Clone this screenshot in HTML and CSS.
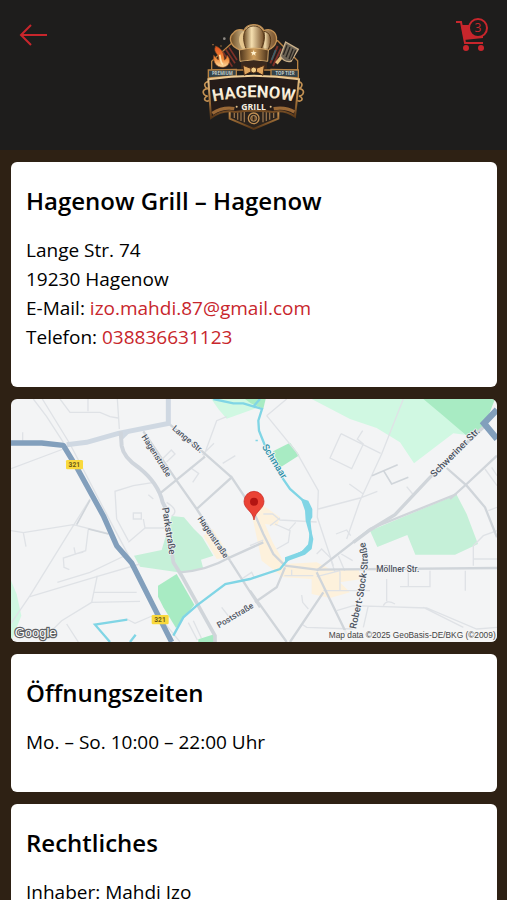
FILE: index.html
```html
<!DOCTYPE html>
<html lang="de">
<head>
    <meta charset="UTF-8">
    <meta name="viewport" content="width=device-width, initial-scale=1.0">
    <title>Hagenow Grill – Hagenow</title>
    <link rel="stylesheet" href="styles.css">
</head>
<body>

    <header class="header">
        <a class="back" href="#" aria-label="Zurück">
            <svg class="back-icon" viewBox="0 0 28 24">
                <path d="M28 12H2M12 2L2 12L12 22"/>
            </svg>
        </a>

        <!-- Logo -->
        <a class="logo" href="#" aria-label="Hagenow Grill">
            <svg class="logo-image" viewBox="-4 0 390 390">
                <defs>
                    <linearGradient id="gold" x1="0" y1="0" x2="0" y2="1">
                        <stop offset="0" stop-color="#f0d09a"/>
                        <stop offset="0.5" stop-color="#b98343"/>
                        <stop offset="1" stop-color="#553416"/>
                    </linearGradient>
                    <linearGradient id="puff" x1="0" y1="0" x2="1" y2="0">
                        <stop offset="0" stop-color="#6b4a22"/>
                        <stop offset="0.4" stop-color="#f5dfaf"/>
                        <stop offset="1" stop-color="#76502a"/>
                    </linearGradient>
                    <linearGradient id="band" x1="0" y1="0" x2="1" y2="0">
                        <stop offset="0" stop-color="#4a3119"/>
                        <stop offset="0.5" stop-color="#d2a15d"/>
                        <stop offset="1" stop-color="#4a3119"/>
                    </linearGradient>
                    <linearGradient id="fire" x1="0" y1="0" x2="0" y2="1">
                        <stop offset="0" stop-color="#e2501d"/>
                        <stop offset="0.6" stop-color="#f28b3a"/>
                        <stop offset="1" stop-color="#ffe0a4"/>
                    </linearGradient>
                    <linearGradient id="letters" x1="0" y1="0" x2="0" y2="1">
                        <stop offset="0.3" stop-color="#fffaf0"/>
                        <stop offset="1" stop-color="#e6c896"/>
                    </linearGradient>
                    <path id="nameArc" d="M50 279Q190 245 330 279"/>
                </defs>

                <!-- Schild -->
                <path d="M128 96L64 154V180H322V152L262 92Z" fill="#231f1d" stroke="#b98343" stroke-width="4"/>
                <path d="M106 118L134 160M98 126L126 170M116 112L140 150" stroke="#7d3128" stroke-width="5"/>
                <path d="M262 108L240 160M272 116L248 168" stroke="#7d3128" stroke-width="6"/>
                <path d="M256 120L244 150" stroke="#38616b" stroke-width="5"/>
                <path d="M118 276V326L190 357L264 326V276Z" fill="#2b231d" stroke="url(#gold)" stroke-width="6"/>
                <path d="M132 302V324M142 302V329M152 304V333M162 304V337M218 304V337M228 304V333M238 302V329M250 302V324" stroke="#94714a" stroke-width="4"/>
                <circle cx="190" cy="325" r="16" fill="#2b231d" stroke="#c39153" stroke-width="4"/>
                <circle cx="190" cy="325" r="9" fill="#7b562e" stroke="#d9b27a" stroke-width="2"/>
                <path d="M188 319H192V331H188Z" fill="#2b231d"/>

                <!-- Kochmütze -->
                <path d="M150 120C120 112 112 82 130 68C142 54 158 60 162 62C168 38 212 38 220 62C242 52 262 68 258 94C254 110 240 118 230 122Z" fill="url(#puff)" stroke="#c49356" stroke-width="4"/>
                <path d="M158 118C142 100 142 74 160 64C172 76 168 100 172 118Z" fill="#e4c58c"/>
                <path d="M168 118C150 76 164 48 190 48C218 48 230 76 212 118Z" fill="url(#puff)" stroke="#5b3c1c" stroke-width="3"/>
                <path d="M212 118C224 96 224 76 220 64C240 66 248 88 234 118Z" fill="url(#puff)" stroke="#5b3c1c" stroke-width="3"/>
                <path d="M147 120Q190 109 234 120L232 154Q190 145 149 154Z" fill="url(#band)" stroke="#d6aa6b" stroke-width="3"/>
                <path d="M190 120L192 126L199 127L194 131L196 137L190 133L184 137L186 131L181 127L188 126Z" fill="#fff2ce"/>
                <path d="M152 156Q190 148 230 156V176H152Z" fill="#3a281c"/>

                <!-- Flamme -->
                <path d="M76 108C66 130 90 132 84 150C78 144 74 140 70 136C68 158 78 172 98 172C118 170 124 148 110 136C110 144 106 148 102 150C102 134 96 116 76 108Z" fill="url(#fire)" stroke="#8f4a1e" stroke-width="2"/>
                <path d="M88 134C92 146 88 156 98 164" fill="none" stroke="#ffe3ad" stroke-width="5"/>
                <circle cx="102" cy="86" r="4" fill="#8f8a84"/>
                <circle cx="68" cy="104" r="2" fill="#d38d4d"/>
                <circle cx="92" cy="108" r="2" fill="#b98343"/>

                <!-- Pfannenwender -->
                <path d="M276 138L258 160" stroke="#e8c07f" stroke-width="10"/>
                <path d="M286 96L324 118L302 154Q282 158 270 138Z" fill="#6d6456" stroke="#cbb18b" stroke-width="4"/>
                <path d="M290 106L279 134M299 111L287 142M308 116L296 147M316 121L303 149" stroke="#28241f" stroke-width="4"/>

                <!-- Banner -->
                <path d="M54 180L138 178V198L54 204ZM242 178L324 180V204L242 198Z" fill="#33434a" stroke="#b98343" stroke-width="4"/>
                <text class="logo-tag" x="96" y="196">PREMIUM</text>
                <text class="logo-tag" x="284" y="196">TOP TIER</text>
                <path d="M58 214C34 216 44 236 54 236C30 236 38 258 52 258C32 266 50 280 58 270M320 214C344 216 334 236 324 236C348 236 340 258 326 258C346 266 328 280 320 270" fill="none" stroke="#c39153" stroke-width="5"/>
                <path d="M54 208Q190 186 326 208L314 320Q282 298 248 306Q190 298 134 306Q98 298 62 324Z" fill="#251b18" stroke="url(#gold)" stroke-width="6"/>
                <path d="M66 310Q98 290 132 296M312 306Q286 290 250 296" fill="none" stroke="#9a6836" stroke-width="10"/>

                <!-- Fliege -->
                <path d="M158 166L184 176V184L162 196ZM222 166L196 176V184L218 196Z" fill="#e0a65e" stroke="#4b2b15" stroke-width="3"/>
                <circle cx="190" cy="180" r="9" fill="#f0cb86" stroke="#4b2b15" stroke-width="3"/>

                <text class="logo-name"><textPath href="#nameArc" startOffset="50%">HAGENOW</textPath></text>
                <text class="logo-grill" x="190" y="299">GRILL</text>
                <circle cx="139" cy="290" r="3" fill="#e6c48d"/>
                <circle cx="241" cy="290" r="3" fill="#e6c48d"/>
            </svg>
        </a>

        <a class="cart" href="#" aria-label="Warenkorb, 3 Artikel">
            <svg class="cart-icon" viewBox="0 0 32 34">
                <path d="M0 4H5L9 25H27" fill="none" stroke="currentColor" stroke-width="2"/>
                <path d="M5 7H27V20L8 22Z" fill="currentColor"/>
                <circle cx="10" cy="30" r="3" fill="currentColor"/>
                <circle cx="25" cy="30" r="3" fill="currentColor"/>
                <circle class="cart-badge" cx="22" cy="10" r="9"/>
                <text class="cart-count" x="22" y="14">3</text>
            </svg>
        </a>
    </header>

    <main class="content">
        <section class="card">
            <h2>Hagenow Grill – Hagenow</h2>
            <p>
                Lange Str. 74<br>
                19230 Hagenow<br>
                E-Mail: <a href="mailto:izo.mahdi.87@gmail.com">izo.mahdi.87@gmail.com</a><br>
                Telefon: <a href="tel:038836631123">038836631123</a>
            </p>
        </section>

        <!-- Karte -->
        <a class="map" href="#" aria-label="Karte">
            <svg class="map-image" viewBox="33 15 1458 729">
                <rect x="33" y="15" width="1458" height="729" fill="#f3f4f5"/>

                <!-- Grünflächen -->
                <g fill="#d0f8e2">
                    <path d="M634 15H790V35L680 74L655 45Z"/>
                    <path d="M935 15H1290L1395 122L1360 118L1242 208L1200 145L1130 102L1050 75Z"/>
                    <path d="M33 560L50 600L64 665L33 744Z"/>
                    <path d="M402 485L485 468L515 366L552 370L582 405L607 430L640 485L603 497L610 525L545 536L420 518Z" fill="#c5f0d8"/>
                    <path d="M1110 410L1370 302L1400 360L1434 450L1365 482H1246L1222 423L1132 459Z" fill="#c5f0d8"/>
                </g>
                <g fill="#a8ebc3">
                    <path d="M735 15H797L790 44L752 28Z"/>
                    <path d="M1270 15H1485L1450 105L1400 125L1330 65Z"/>
                    <path d="M819 172L870 146L898 184L838 222Z"/>
                    <path d="M474 575L530 540L583 632L528 702L490 640L474 608Z"/>
                    <path d="M595 736L645 720V744H595Z"/>
                </g>

                <!-- Einkaufsstraßen -->
                <g fill="#fdf1dc">
                    <path d="M610 425L638 405L692 490L650 495Z"/>
                    <path d="M752 345L790 335L840 370L832 395L795 390L818 445L855 510L950 505L1000 530L1075 525L1085 555L1020 565L1050 595L990 612L935 600L935 555L850 550L785 500Z"/>
                </g>

                <!-- Nebenstraßen -->
                <g class="road-thin">
                    <path d="M100 15L140 68L190 145M127 15L210 150L330 380L410 530L480 670L540 744"/>
                    <path d="M33 224L190 165M180 15L210 55L300 55L330 68L354 72M264 15V52M352 15L358 105M68 140V115"/>
                    <path d="M270 315L220 395L90 605L33 688M33 410L70 416L220 392L330 420M70 416L78 458M265 405L257 470L190 492L192 520L208 527M222 460L226 480L250 474"/>
                    <path d="M172 565L270 535L385 480M90 608L300 545L420 510M292 545L275 625L420 622M275 625L185 680L120 744M280 595H410"/>
                    <path d="M350 375L345 292L400 275L462 265M350 375L385 440M430 375L435 402L385 445M400 357H424V375H400ZM435 402H500M500 325Q540 350 515 366"/>
                    <path d="M487 195L514 168L525 180L500 204M570 220L596 238L578 265M607 182L642 148M610 190L650 80L680 68M668 208L706 185"/>
                    <path d="M380 675L405 688L470 660M565 686L592 738M580 680L604 732M665 640L690 672M725 555L755 535L762 550M200 690L235 744"/>
                    <path d="M800 65L890 175L955 290L952 370L1000 515M800 65L860 15M955 345L1080 312L1132 292M1048 270L1090 300M1210 15L1145 180L1080 320L1040 435"/>
                    <path d="M1023 119L1142 178M1023 119L990 192L1055 224L1090 150L1072 135L1088 110M1220 278L1238 300"/>
                    <path d="M790 360H818L840 378L950 384M810 395L840 372M825 390L870 410L865 445L830 465M887 385L865 410M750 455L790 438M1008 420L1040 408L1052 425"/>
                    <path d="M950 480L965 465L990 490L1005 535M1015 485L1034 530M1024 480L1058 500M875 527V545M853 545H940M950 548L1020 530M970 590H1110M1020 532V590"/>
                    <path d="M1160 555V622M1150 635Q1160 615 1185 630M1225 530V578M1200 578H1290V530M1396 530V590M1105 635L1090 700M1010 650L1060 635L1280 642L1430 705L1491 700M1270 640L1390 700"/>
                    <path d="M905 603L908 625L925 645M905 690L920 700L1060 705M1420 515V455L1450 425L1491 410M1465 350L1491 340M1420 495H1491M1455 225L1491 275M1475 220L1491 245"/>
                    <path d="M445 302L460 315"/>
                </g>
                <g class="road-gray">
                    <path d="M1116 245L1193 212M1152 232L1175 270L1225 250M230 392L270 318M265 405L325 420" stroke-width="5"/>
                    <path d="M755 340L790 420L820 480L855 515M855 520L830 580L765 625M750 590L860 744"/>
                    <path d="M540 535Q620 530 690 490L790 445M690 500L780 640"/>
                    <path d="M530 260L590 345M430 112L530 260M590 345L695 250L755 340M590 345L690 500M695 250L610 175L510 92M480 298L615 188"/>
                    <path d="M498 345L520 505L545 545L645 725V744" stroke-width="11"/>
                    <path d="M870 744L970 595M950 535L1040 720M855 515L950 527L1491 522M1340 222L1400 275L1455 340L1491 430M1350 315L1400 270L1491 185"/>
                    <path d="M950 530L1110 405L1370 300"/>
                    <path d="M1060 445L1110 408L1185 362L1290 250L1450 100" stroke-width="10"/>
                </g>

                <!-- Hauptstraßen -->
                <path d="M200 152L260 145L355 118L505 88V15" fill="none" stroke="#cfd8e2" stroke-width="15"/>
                <path d="M345 118L370 135L395 110Z" fill="#cfd8e2"/>
                <path d="M362 112L365 155Q370 190 418 222Q475 268 488 325L498 345" fill="none" stroke="#cfd5dc" stroke-width="12"/>
                <path d="M33 147H125L190 154L230 220L310 365L350 455L395 507L455 626L515 744" fill="none" stroke="#829fbc" stroke-width="16" stroke-linejoin="round"/>
                <path d="M1491 47L1452 88L1491 135" fill="none" stroke="#829fbc" stroke-width="19"/>

                <!-- Schmaar -->
                <g class="water">
                    <path d="M640 15L700 28H730L786 45L775 80L777 110L793 150L846 250M762 35L780 15"/>
                    <path d="M846 250L870 285L910 320L925 350L933 430L925 465L865 495L840 525L750 555L676 570L590 635L550 670L520 725M770 137V142"/>
                    <path d="M382 677L285 692L330 744M390 744L407 722"/>
                </g>
                <path d="M902 313L925 320L937 345V370L928 385L940 435L935 465L915 482L855 504V490L905 472L925 450L928 420L917 380L915 350Z" fill="#80d5e5"/>

                <!-- Beschriftung -->
                <g class="map-label">
                    <text transform="translate(515 106) rotate(40)">Lange Str.</text>
                    <text transform="translate(424 128) rotate(58)">Hagenstraße</text>
                    <text transform="translate(592 374) rotate(56)">Hagenstraße</text>
                    <text transform="translate(657 703) rotate(-31)">Poststraße</text>
                    <text x="1129" y="534">Möllner Str.</text>
                </g>
                <g class="map-label map-label-big">
                    <text transform="translate(486 342) rotate(81)">Parkstraße</text>
                    <text transform="translate(1303 251) rotate(-45)">Schweriner Str.</text>
                    <text class="label-water" transform="translate(785 158) rotate(58)">Schmaar</text>
                    <path id="stockStreet" d="M1068 706C1078 650 1093 610 1098 550Q1112 490 1090 430" fill="none"/>
                    <text><textPath href="#stockStreet">Robert-Stock-Straße</textPath></text>
                </g>

                <!-- Bundesstraße 321 -->
                <rect x="198" y="198" width="51" height="28" rx="4" fill="#f9d93d"/>
                <text class="shield" x="223" y="220">321</text>
                <rect x="455" y="663" width="51" height="28" rx="4" fill="#f9d93d"/>
                <text class="shield" x="480" y="685">321</text>

                <!-- Markierung -->
                <path d="M762 378C758 350 732 346 732 322A30 30 0 0 1 792 322C792 346 766 350 762 378Z" fill="#ea4335" stroke="#c5221f" stroke-width="2"/>
                <circle cx="762" cy="323" r="12" fill="#b31412"/>

                <text class="google" x="44" y="728">Google</text>
                <rect x="985" y="708" width="506" height="36" fill="#f5f5f5" opacity="0.7"/>
                <text class="map-data" x="1487" y="733">Map data ©2025 GeoBasis-DE/BKG (©2009)</text>
            </svg>
        </a>

        <section class="card">
            <h2>Öffnungszeiten</h2>
            <p>Mo. – So. 10:00 – 22:00 Uhr</p>
        </section>

        <section class="card">
            <h2>Rechtliches</h2>
            <p>Inhaber: Mahdi Izo</p>
        </section>
    </main>

</body>
</html>
```

FILE: styles.css
```css
* {
    box-sizing: border-box;
}

body {
    margin: 0;
    font-family: "Open Sans", sans-serif;
    font-size: 19px;
    line-height: 29px;
    color: #000;
    background-color: #2e2114;
}

a {
    color: #c8262c;
    text-decoration: none;
}

/* Kopfzeile */
.header {
    display: grid;
    grid-template-columns: 1fr auto 1fr;
    align-items: start;
    padding: 10px 19px;
    background-color: #1e1d1c;
}

.header svg {
    display: block;
}

.back {
    justify-self: start;
    padding-top: 13px;
}

.back-icon {
    width: 28px;
    height: 24px;
    fill: none;
    stroke: #c8262c;
    stroke-width: 2;
}

.logo-image {
    width: 130px;
    height: 130px;
}

.logo-tag {
    font: bold 13px "Open Sans", sans-serif;
    fill: #c3cdca;
    text-anchor: middle;
}

.logo-name {
    font: bold 50px Roboto, sans-serif;
    fill: url(#letters);
    stroke: #1c1412;
    stroke-width: 4;
    paint-order: stroke;
    text-anchor: middle;
}

.logo-grill {
    font: bold 26px "Open Sans", sans-serif;
    fill: #f7efe0;
    text-anchor: middle;
}

.cart {
    justify-self: end;
    padding-top: 8px;
}

.cart-icon {
    width: 32px;
    height: 34px;
}

.cart-badge {
    fill: #1e1d1c;
    stroke: #c8262c;
    stroke-width: 2;
}

.cart-count {
    font: 12px "Open Sans", sans-serif;
    fill: #c8262c;
    text-anchor: middle;
}

/* Inhalt */
.content {
    display: flex;
    flex-direction: column;
    gap: 12px;
    padding: 12px 10px 12px 11px;
}

.card {
    padding: 15px;
    border-radius: 6px;
    background-color: #fff;
}

.card h2 {
    margin: 9px 0 20px;
    font-size: 24px;
    font-weight: 600;
    line-height: 30px;
}

.card p {
    margin: 0 0 20px;
}

/* Karte */
.map {
    display: block;
    overflow: hidden;
    border-radius: 6px;
}

.map-image {
    display: block;
    width: 100%;
}

.road-thin {
    fill: none;
    stroke: #dfe2e6;
    stroke-width: 4;
}

.road-gray {
    fill: none;
    stroke: #d0d5da;
    stroke-width: 7;
}

.water {
    fill: none;
    stroke: #80d5e5;
    stroke-width: 7;
}

.map-label {
    font-family: Roboto, sans-serif;
    font-size: 25px;
    font-weight: 500;
    fill: #4c535f;
    stroke: #f5f6f7;
    stroke-width: 4;
    paint-order: stroke;
}

.map-label-big {
    font-size: 29px;
}

.map-label path {
    stroke: none;
}

.label-water {
    fill: #2c8fa8;
}

.shield {
    font: bold 20px Roboto, sans-serif;
    fill: #6b5a17;
    text-anchor: middle;
}

.google {
    font: 39px "Liberation Sans", sans-serif;
    fill: #fff;
    stroke: #5f6164;
    stroke-width: 7;
    paint-order: stroke;
}

.map-data {
    font: 25px "Liberation Sans", sans-serif;
    fill: #444;
    text-anchor: end;
}
```
